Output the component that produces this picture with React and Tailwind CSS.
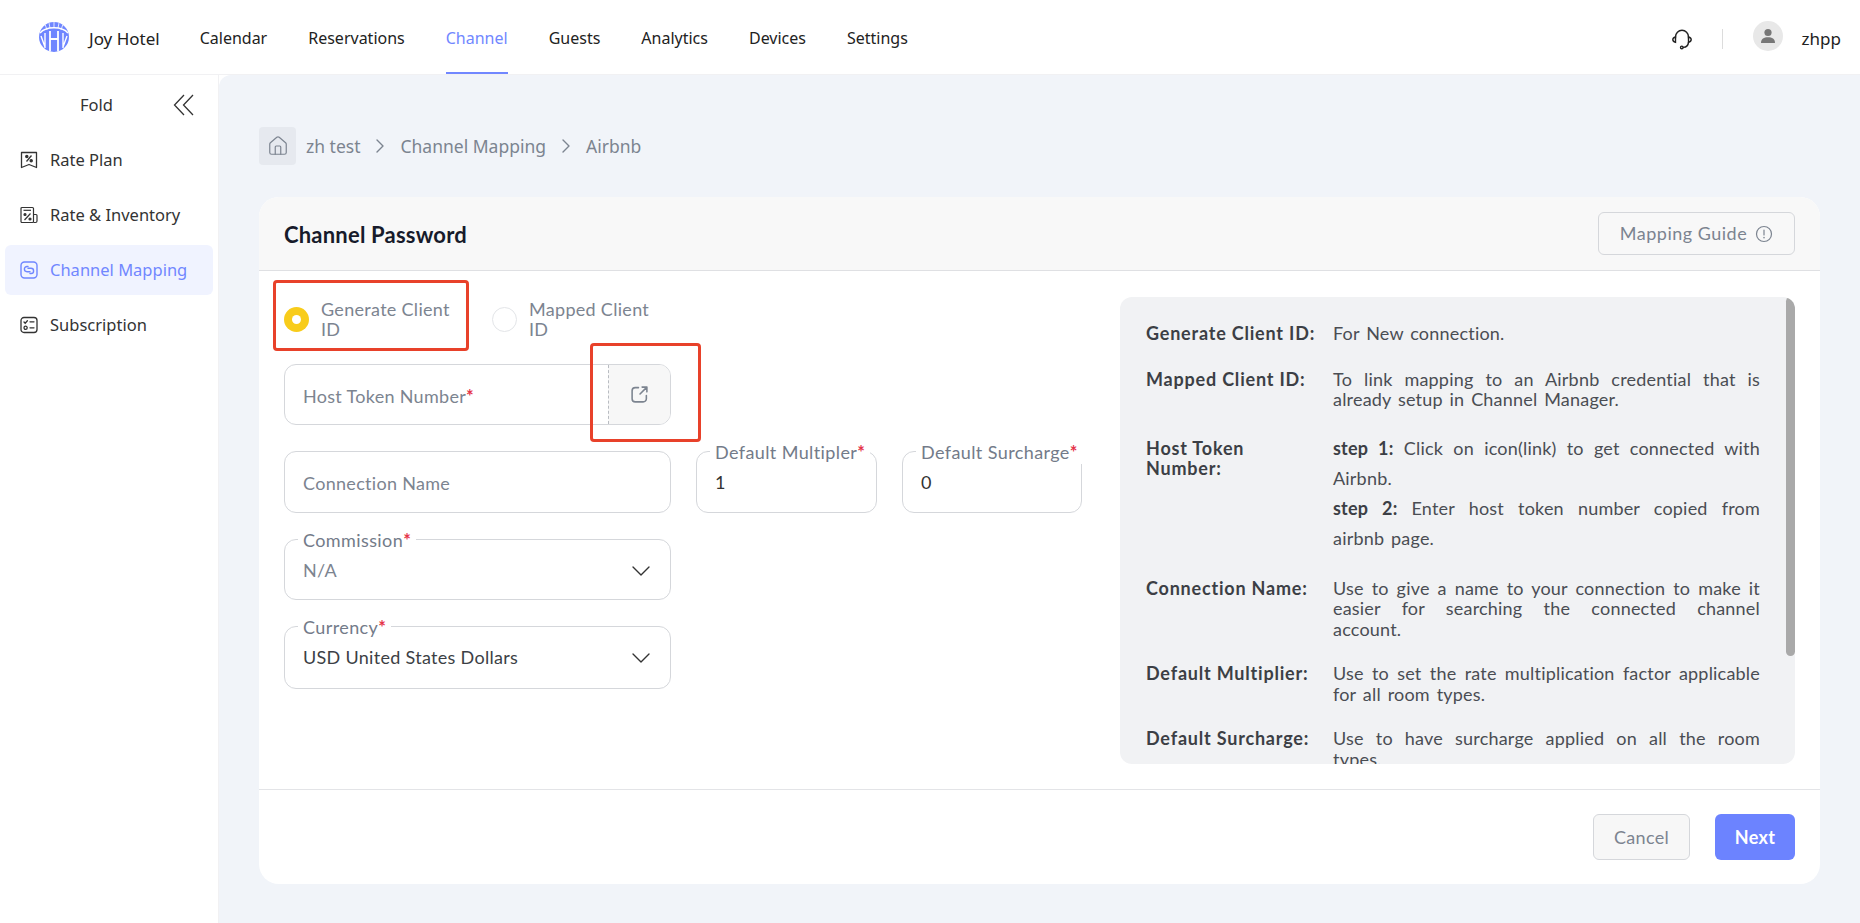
import React from "react";
import { ChevronDown, ChevronRight, House } from "lucide-react";

const navItems = ["Calendar", "Reservations", "Channel", "Guests", "Analytics", "Devices", "Settings"];

function Logo() {
  return (
    <svg width="32" height="32" viewBox="0 0 32 32" className="mb-[4px]">
      <defs>
        <clipPath id="logoClip">
          <circle cx="16" cy="16" r="15" />
        </clipPath>
      </defs>
      <circle cx="16" cy="16" r="15" fill="#6f86ff" />
      <g clipPath="url(#logoClip)" stroke="#fff" fill="none">
        <path d="M2 12 C8 5 24 5 30 12" strokeWidth="1.6" />
        <path d="M7 3 L9 9 M11 2 L12 7 M16 1 L16 7 M21 2 L20 7 M25 3 L23 9" strokeWidth="0.8" />
        <path d="M12 10 V31 M20 10 V31 M12 18 H20" strokeWidth="1.8" />
        <path d="M7 12 V27 M25 12 V27 M3 15 L7 26 M29 15 L25 26" strokeWidth="1.4" />
      </g>
    </svg>
  );
}

function HeadsetIcon() {
  return (
    <svg width="22" height="22" viewBox="0 0 22 22" fill="none" stroke="#222" strokeWidth="1.4" strokeLinecap="round">
      <path d="M4.5 10 V8.8 a6.5 6.5 0 0 1 13 0 V10" />
      <path d="M4.5 8.8 C2.6 9.4 1.8 10.6 1.8 11.6 C1.8 12.8 2.8 14 4.5 14.4 Z" />
      <path d="M17.5 8.8 C19.4 9.4 20.2 10.6 20.2 11.6 C20.2 12.8 19.2 14 17.5 14.4 Z" />
      <path d="M17.5 14.4 C17.2 17.5 15 19.2 12.4 19.4" />
      <circle cx="10.8" cy="19.4" r="1.3" />
    </svg>
  );
}

function FoldIcon() {
  return (
    <svg width="22" height="22" viewBox="0 0 22 22" fill="none" stroke="#333" strokeWidth="1.3">
      <path d="M11 1 L1.5 11 L11 21" />
      <path d="M20 1 L10.5 11 L20 21" />
    </svg>
  );
}

function RatePlanIcon() {
  return (
    <svg width="18" height="18" viewBox="0 0 18 18" fill="none" stroke="#333" strokeWidth="1.3" strokeLinejoin="round">
      <path d="M1.5 1.5 H16.5 V16.5 L9 13.5 L1.5 16.5 Z" />
      <path d="M11.5 4.5 L6.5 10.5" />
      <circle cx="6.8" cy="5.5" r="1.1" fill="#333" />
      <circle cx="11.2" cy="9.7" r="1.1" fill="#333" />
    </svg>
  );
}

function RateInventoryIcon() {
  return (
    <svg width="18" height="18" viewBox="0 0 18 18" fill="none" stroke="#333" strokeWidth="1.2" strokeLinejoin="round">
      <rect x="1" y="1.5" width="12.5" height="15" rx="1" />
      <path d="M13.5 8.5 H16 a1 1 0 0 1 1 1 V15 a1.5 1.5 0 0 1 -1.5 1.5 H13.5" />
      <path d="M3.5 4.3 H11" />
      <path d="M10.5 7.5 L4.5 14" />
      <circle cx="5" cy="8.5" r="1" fill="#333" />
      <circle cx="10" cy="13" r="1" fill="#333" />
    </svg>
  );
}

function MappingIcon() {
  return (
    <svg width="18" height="18" viewBox="0 0 18 18" fill="none" stroke="#6f86ff" strokeWidth="1.4" strokeLinecap="round">
      <rect x="1" y="1" width="16" height="16" rx="3.5" />
      <path d="M8 5.5 H7 a2.6 2.6 0 0 0 0 5.2 H10" />
      <path d="M10 12.5 H11 a2.6 2.6 0 0 0 0 -5.2 H8" />
    </svg>
  );
}

function SubscriptionIcon() {
  return (
    <svg width="18" height="18" viewBox="0 0 18 18" fill="none" stroke="#333" strokeWidth="1.3" strokeLinecap="round">
      <rect x="1" y="1.5" width="16" height="15" rx="3" />
      <path d="M4 6 L5.2 7.2 L7.4 4.8" />
      <path d="M10 5.8 H14 M10 11.8 H14" />
      <circle cx="5.6" cy="11.8" r="1.6" />
    </svg>
  );
}

function OpenLinkIcon() {
  return (
    <svg width="19" height="19" viewBox="0 0 18 18" fill="none" stroke="#7c8490" strokeWidth="1.5" strokeLinecap="round" strokeLinejoin="round">
      <path d="M8 2.5 H5 a3 3 0 0 0 -3 3 V13 a3 3 0 0 0 3 3 H12.5 a3 3 0 0 0 3 -3 V10" />
      <path d="M9.5 8.5 L16 2 M11.5 2 H16 V6.5" />
    </svg>
  );
}

function InfoIcon() {
  return (
    <svg width="18" height="18" viewBox="0 0 18 18" fill="none" stroke="#7c8490" strokeWidth="1.2" strokeLinecap="round">
      <circle cx="9" cy="9" r="7.5" />
      <path d="M9 5 V10" />
      <path d="M9 12.6 V12.8" strokeWidth="1.5" />
    </svg>
  );
}

function SideItem({ icon, label, active }) {
  return (
    <div className={`mx-[5px] h-[50px] flex items-center gap-[12px] pl-[15px] rounded-md text-[16.5px] ${active ? "bg-[#f0f3ff] text-[#7187ff]" : "text-[#333]"}`}>
      {icon}
      <span>{label}</span>
    </div>
  );
}

function Star() {
  return <span className="text-[#e5344a] font-bold">*</span>;
}

function FloatLabel({ children }) {
  return (
    <span className="absolute left-[13px] -top-[12px] bg-white px-[5px] text-[#737b89] text-[18px] tracking-[0.4px] leading-[24px] whitespace-nowrap">
      {children}
    </span>
  );
}

function Radio({ label, checked }) {
  return (
    <div className="flex items-center gap-[12px] w-[197px]">
      {checked ? (
        <span className="w-[25px] h-[25px] rounded-full bg-[#f8cc1b] flex items-center justify-center shrink-0">
          <span className="w-[9px] h-[9px] rounded-full bg-white" />
        </span>
      ) : (
        <span className="w-[25px] h-[25px] rounded-full border border-[#e3e5e8] shrink-0" />
      )}
      <span className="text-[#7c8490] text-[18px] tracking-[0.3px] leading-[20px]">
        {label}
        <br />
        ID
      </span>
    </div>
  );
}

function SelectBox({ label, value, valueClass, height }) {
  return (
    <div className={`relative w-[387px] ${height} border border-[#d5d7db] rounded-[12px] pl-[18px] pr-[13px] pt-[16px] flex justify-between`}>
      <FloatLabel>
        {label}
        <Star />
      </FloatLabel>
      <span className={`text-[18px] tracking-[0.3px] leading-[28px] ${valueClass}`}>{value}</span>
      <ChevronDown size={32} strokeWidth={1} className="text-[#333] -mt-[1px]" />
    </div>
  );
}

function GuideRow({ label, children, className }) {
  return (
    <div className={`flex ${className || ""}`}>
      <div className="w-[187px] shrink-0 font-bold text-[#3c3f45] leading-[20px] tracking-[0.8px]">{label}</div>
      <div className="w-[427px] text-justify leading-[20.5px] [word-spacing:2px]">{children}</div>
    </div>
  );
}

export default function App() {
  return (
    <div className="h-[923px] w-[1860px] overflow-hidden bg-white flex flex-col font-['Noto_Sans',sans-serif] text-[16px]">
      {/* top bar */}
      <header className="h-[75px] shrink-0 flex items-center border-b border-[#f1f1f3] pt-[4px] pl-[38px] pr-[19px] text-[#222]">
        <Logo />
        <span className="ml-[19px] mr-[40px] text-[17px]">Joy Hotel</span>
        <nav className="flex gap-[41px] h-full">
          {navItems.map((item) => (
            <a
              key={item}
              className={`flex items-center h-full border-b-2 ${item === "Channel" ? "text-[#7187ff] border-[#7187ff]" : "border-transparent"}`}
            >
              {item}
            </a>
          ))}
        </nav>
        <div className="ml-auto flex items-center">
          <HeadsetIcon />
          <span className="w-px h-[20px] bg-[#dcdcdc] ml-[29px] mr-[30px]" />
          <span className="w-[30px] h-[30px] rounded-full bg-[#e8e8e8] flex items-center justify-center mb-[6px]">
            <svg width="16" height="16" viewBox="0 0 16 16" fill="#777">
              <circle cx="8" cy="4.5" r="3.6" />
              <path d="M1 15 C1 10.5 4 9.2 8 9.2 C12 9.2 15 10.5 15 15 Z" />
            </svg>
          </span>
          <span className="ml-[19px] text-[17px]">zhpp</span>
        </div>
      </header>

      <div className="flex-1 flex min-h-0">
        {/* side menu */}
        <aside className="w-[219px] shrink-0 bg-white border-r border-[#f1f1f3]">
          <div className="h-[60px] flex items-center pl-[80px] pr-[23px] justify-between text-[#333] text-[16.5px]">
            <span>Fold</span>
            <FoldIcon />
          </div>
          <div>
            <SideItem icon={<RatePlanIcon />} label="Rate Plan" />
            <div className="mt-[5px]">
              <SideItem icon={<RateInventoryIcon />} label="Rate & Inventory" />
            </div>
            <div className="mt-[5px]">
              <SideItem icon={<MappingIcon />} label="Channel Mapping" active />
            </div>
            <div className="mt-[5px]">
              <SideItem icon={<SubscriptionIcon />} label="Subscription" />
            </div>
          </div>
        </aside>

        <main className="flex-1 bg-[#f1f4f9] rounded-tl-xl pl-[40px] pr-[40px] pt-[52px] text-[#7c8490]">
          {/* breadcrumb */}
          <div className="flex items-center h-[38px] text-[17.5px]">
            <span className="w-[37px] h-[38px] rounded bg-[#e6e9ef] flex items-center justify-center mr-[10px]">
              <House size={22} strokeWidth={1.3} className="text-[#7c8490]" />
            </span>
            <span>zh test</span>
            <ChevronRight size={24} strokeWidth={1.4} className="mx-[8px]" />
            <span>Channel Mapping</span>
            <ChevronRight size={24} strokeWidth={1.4} className="mx-[8px]" />
            <span>Airbnb</span>
          </div>

          {/* card */}
          <section className="mt-[32px] h-[687px] bg-white rounded-[20px] flex flex-col font-['Lato',sans-serif]">
            <div className="h-[74px] shrink-0 bg-[#f8f8f8] rounded-t-[20px] border-b border-[#dfe0e3] pl-[25px] pr-[25px] flex items-center justify-between">
              <h2 className="text-[22px] font-bold text-[#171b2b] tracking-[0.2px] pt-[1px]">Channel Password</h2>
              <button className="w-[197px] h-[43px] border border-[#d5d7db] rounded-md flex items-center justify-center gap-[8px] text-[#7c8490] text-[18px] tracking-[0.5px]">
                Mapping Guide
                <InfoIcon />
              </button>
            </div>

            <div className="flex-1 flex min-h-0 pl-[25px] pr-[25px] relative">
              {/* left form */}
              <div className="w-[798px] shrink-0 pt-[28px] text-[18px] tracking-[0.3px]">
                <div className="flex gap-[11px] h-[40px]">
                  <Radio label="Generate Client" checked />
                  <Radio label="Mapped Client" />
                </div>

                <div className="mt-[25px] w-[387px] h-[61px] border border-[#d5d7db] rounded-[12px] flex overflow-hidden">
                  <div className="flex-1 flex items-center pl-[18px] pt-[3px]">
                    Host Token Number
                    <Star />
                  </div>
                  <div className="w-[62px] bg-[#f7f7f7] border-l border-dashed border-[#b9bcc2] flex items-center justify-center">
                    <OpenLinkIcon />
                  </div>
                </div>

                <div className="mt-[26px] flex">
                  <div className="w-[387px] h-[62px] border border-[#d5d7db] rounded-[12px] flex items-center pl-[18px] pt-[2px]">
                    Connection Name
                  </div>
                  <div className="relative ml-[25px] w-[181px] h-[62px] border border-[#d5d7db] rounded-[12px] flex items-center pl-[18px] text-[#333]">
                    <FloatLabel>
                      Default Multipler
                      <Star />
                    </FloatLabel>
                    1
                  </div>
                  <div className="relative ml-[25px] w-[180px] h-[62px] border border-[#d5d7db] rounded-[12px] flex items-center pl-[18px] text-[#333]">
                    <FloatLabel>
                      Default Surcharge
                      <Star />
                    </FloatLabel>
                    0
                  </div>
                </div>

                <div className="mt-[26px]">
                  <SelectBox label="Commission" value="N/A" valueClass="text-[#7c8490]" height="h-[61px]" />
                </div>
                <div className="mt-[26px]">
                  <SelectBox label="Currency" value="USD United States Dollars" valueClass="text-[#3c3f45]" height="h-[63px]" />
                </div>
              </div>

              {/* guide panel */}
              <div className="relative ml-[38px] mt-[26px] w-[675px] h-[467px] bg-[#f1f2f4] rounded-xl overflow-hidden pl-[26px] pt-[26px] text-[#4a4d53] text-[18px] tracking-[0.2px]">
                <GuideRow label="Generate Client ID:">For New connection.</GuideRow>
                <GuideRow label="Mapped Client ID:" className="mt-[25px]">
                  To link mapping to an Airbnb credential that is already setup in Channel Manager.
                </GuideRow>
                <GuideRow
                  label={
                    <>
                      Host Token
                      <br />
                      Number:
                    </>
                  }
                  className="mt-[28px]"
                >
                  <p className="leading-[30px] -mt-[5px]">
                    <b className="text-[#3c3f45]">step 1:</b> Click on icon(link) to get connected with Airbnb.
                  </p>
                  <p className="leading-[30px]">
                    <b className="text-[#3c3f45]">step 2:</b> Enter host token number copied from airbnb page.
                  </p>
                </GuideRow>
                <GuideRow label="Connection Name:" className="mt-[25px]">
                  Use to give a name to your connection to make it easier for searching the connected channel account.
                </GuideRow>
                <GuideRow label="Default Multiplier:" className="mt-[24px]">
                  Use to set the rate multiplication factor applicable for all room types.
                </GuideRow>
                <GuideRow label="Default Surcharge:" className="mt-[24px]">
                  Use to have surcharge applied on all the room types.
                </GuideRow>
                <div className="absolute right-0 top-0 w-[9px] h-[359px] bg-[#a9a9a9] rounded-full" />
              </div>

              {/* red annotation boxes */}
              <div className="absolute left-[14px] top-[9px] w-[196px] h-[71px] border-[3px] border-[#e8412a] rounded-[4px]" />
              <div className="absolute left-[331px] top-[72px] w-[111px] h-[99px] border-[3px] border-[#e8412a] rounded-[4px]" />
            </div>

            <div className="h-[95px] shrink-0 border-t border-[#e3e4e7] flex items-start justify-end gap-[25px] pt-[24px] pr-[25px]">
              <button className="w-[97px] h-[46px] bg-[#f7f7f7] border border-[#d5d7db] rounded-md text-[#7c8490] text-[18px] tracking-[0.3px]">Cancel</button>
              <button className="w-[80px] h-[46px] bg-[#6c83ff] rounded-md text-white font-bold text-[18px] tracking-[0.3px]">Next</button>
            </div>
          </section>
        </main>
      </div>
    </div>
  );
}
